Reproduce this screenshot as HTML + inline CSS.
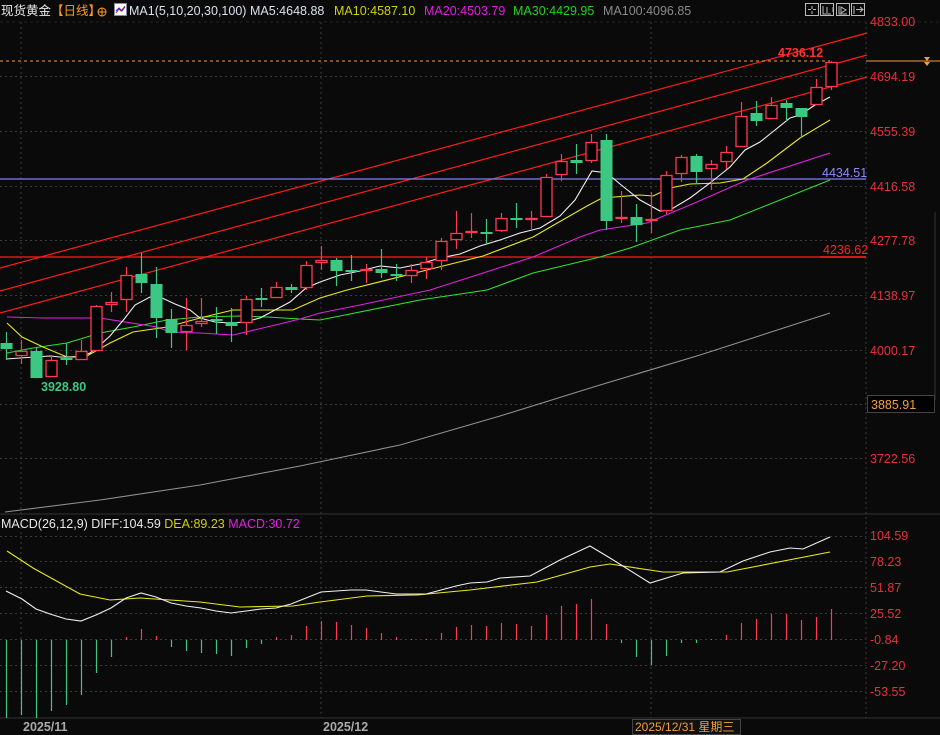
<!DOCTYPE html>
<html><head><meta charset="utf-8">
<style>
html,body{margin:0;padding:0;background:#0a0a0a;width:940px;height:735px;overflow:hidden}
svg{display:block}
text{font-family:"Liberation Sans","Noto Sans CJK SC",sans-serif}
</style></head>
<body>
<svg id="c" width="940" height="735" xmlns="http://www.w3.org/2000/svg">
<rect width="940" height="735" fill="#0a0a0a"/>
<g id="grid" stroke="#3a3a3a" stroke-dasharray="2,3" stroke-width="1"></g>
<!-- vertical grid -->
<g stroke="#3a3a3a" stroke-dasharray="2,3">
<line x1="21" y1="22" x2="21" y2="718"/><line x1="321" y1="22" x2="321" y2="718"/><line x1="651" y1="22" x2="651" y2="718"/>
<line x1="866" y1="22" x2="866" y2="718"/>
</g>
<line x1="0" y1="514" x2="940" y2="514" stroke="#333" />
<line x1="0" y1="718" x2="940" y2="718" stroke="#333" />
<line x1="0" y1="22" x2="940" y2="22" stroke="#222" stroke-dasharray="3,3"/>
<!-- channel lines -->
<g stroke="#ff1a1a" stroke-width="1.2">
<line x1="0" y1="268" x2="867" y2="33"/>
<line x1="0" y1="291" x2="867" y2="55"/>
<line x1="0" y1="313" x2="867" y2="77"/>
<line x1="0" y1="257" x2="866" y2="257"/>
</g>
<line x1="0" y1="179" x2="866" y2="179" stroke="#8080f0" stroke-width="1.2"/>
<line x1="0" y1="61" x2="830" y2="61" stroke="#f0a040" stroke-dasharray="3,3"/>
<line x1="866" y1="61" x2="940" y2="61" stroke="#f0a040"/>
<text x="778" y="57" fill="#ff3030" font-size="12.5" font-weight="bold">4736.12</text>
<text x="822" y="177" fill="#8a8aff" font-size="12.5">4434.51</text>
<text x="823" y="254" fill="#ff2020" font-size="12.5">4236.62</text>
<line x1="820" y1="257" x2="866" y2="257" stroke="#ff2020" stroke-width="1.5"/>
<text x="41" y="391" fill="#3cc882" font-size="12.5" font-weight="bold">3928.80</text>
<path d="M924 57 l6 0 l-3 4z M924 62 l6 0 l-3 4z" fill="#f0a040"/>
<g id="ma" fill="none" stroke-width="1.1"></g>
<g id="cd"></g>
<g id="mh"></g>
<!-- right axis labels -->
<g fill="#e8303c" font-size="12.5">
<text x="870" y="26">4833.00</text><text x="870" y="81">4694.19</text><text x="870" y="136">4555.39</text>
<text x="870" y="191">4416.58</text><text x="870" y="245">4277.78</text><text x="870" y="300">4138.97</text>
<text x="870" y="355">4000.17</text><text x="870" y="463">3722.56</text>
<text x="870" y="540">104.59</text><text x="870" y="566">78.23</text><text x="870" y="592">51.87</text>
<text x="870" y="618">25.52</text><text x="870" y="644">-0.84</text><text x="870" y="670">-27.20</text><text x="870" y="696">-53.55</text>
</g>
<rect x="867.5" y="395.5" width="67" height="17" fill="#000" stroke="#444"/>
<text x="871" y="409" fill="#f0a040" font-size="12.5">3885.91</text>
<line x1="935" y1="212" x2="935" y2="400" stroke="#333"/>
<!-- header -->
<text x="1" y="15" font-size="12.5"><tspan fill="#e8e8e8">现货黄金</tspan><tspan fill="#ff9a20">【日线】</tspan></text>
<circle cx="102" cy="12" r="4" fill="none" stroke="#ff9a20"/><line x1="98" y1="12" x2="106" y2="12" stroke="#ff9a20"/><line x1="102" y1="8" x2="102" y2="16" stroke="#ff9a20"/>
<rect x="114.5" y="3.5" width="12" height="12" fill="#fff" stroke="#88a"/>
<path d="M116 13 l3-4 l2 2 l4-5" stroke="#e02020" fill="none"/><path d="M116 11 l3-3 l3 3 l3-4" stroke="#2030e0" fill="none"/>
<text x="129" y="15" font-size="12.5"><tspan fill="#d8e0f0">MA1(5,10,20,30,100)</tspan><tspan fill="#d8e0f0" x="250">MA5:4648.88</tspan><tspan fill="#d0d010" x="334">MA10:4587.10</tspan><tspan fill="#e020e0" x="424">MA20:4503.79</tspan><tspan fill="#20d020" x="513">MA30:4429.95</tspan><tspan fill="#8a8a8a" x="603">MA100:4096.85</tspan></text>
<g stroke="#bbb" fill="none">
<rect x="805.5" y="3.5" width="13" height="12"/><rect x="820.5" y="3.5" width="13" height="12"/><rect x="836.5" y="3.5" width="13" height="12"/><rect x="851.5" y="3.5" width="13" height="12"/>
<path d="M812 6v3M812 11v3M808 9.5h3M813 9.5h3M823 6v8h8M827 7v6M833 7v5M839 6v8h8M841 7l5 3l-5 3zM854 6v8M856 9.5h6M860 7l3 2.5l-3 2.5"/>
</g>
<!-- macd header -->
<text x="1" y="528" font-size="12.5"><tspan fill="#e8e8e8">MACD(26,12,9) DIFF:104.59 </tspan><tspan fill="#d0d010">DEA:89.23 </tspan><tspan fill="#e020e0">MACD:30.72</tspan></text>
<text x="23" y="731" fill="#aaa" font-size="12.5" font-weight="bold">2025/11</text>
<text x="323" y="731" fill="#aaa" font-size="12.5" font-weight="bold">2025/12</text>
<rect x="632.5" y="719.5" width="108" height="15" fill="#111" stroke="#444"/>
<text x="635" y="731" fill="#f0a040" font-size="12">2025/12/31 星期三</text>
</svg>
<script>
var NS="http://www.w3.org/2000/svg";
function el(p,t,a){var e=document.createElementNS(NS,t);for(var k in a)e.setAttribute(k,a[k]);p.appendChild(e);return e;}
var g=document.getElementById('grid');
[76,131,186,240,295,350,404,458,536,561,587,613,639,665,691].forEach(function(y){el(g,'line',{x1:0,y1:y+.5,x2:866,y2:y+.5});});
var C=[['g',343,349,332,360],['r',351,356,340,364],['g',351,378,348,378],['r',360,377,355,377],['g',358,360,343,365],['r',351,360,340,360],['r',306,351,305,351],['r',302,305,292,312],['r',275,300,267,312],['g',274,283,253,293],['g',284,318,267,338],['g',319,333,309,348],['r',325,332,298,350],['r',321,324,298,327],['g',319,321,307,334],['g',322,326,308,342],['r',299,323,296,335],['g',298,300,288,307],['r',287,298,282,298],['g',287,290,284,293],['r',265,288,261,290],['r',260,263,246,270],['g',260,271,258,286],['g',270,272,255,281],['r',269,271,264,283],['g',269,273,249,278],['g',274,276,264,281],['r',270,276,264,283],['r',262,269,257,279],['r',241,261,238,270],['r',233,240,211,249],['r',231,233,213,238],['g',232,234,219,244],['r',218,231,213,232],['g',218,220,203,228],['r',218,220,211,229],['r',177,217,174,217],['r',161,175,154,181],['g',160,163,144,174],['r',142,161,134,163],['g',140,221,134,230],['r',217,219,191,223],['g',217,225,204,242],['r',219,221,192,233],['r',175,211,171,214],['r',157,174,155,182],['g',156,172,154,183],['r',164,169,160,190],['r',152,162,146,169],['r',116,147,102,147],['g',113,121,101,126],['r',105,119,97,119],['g',103,108,100,121],['g',108,117,108,138],['r',87,105,79,105],['r',62,87,61,90]];
var cd=document.getElementById('cd');
C.forEach(function(c,i){var x=6+15*i;var col=c[0]=='g'?'#3cc882':'#ff3a50';
el(cd,'line',{x1:x+.5,y1:c[3],x2:x+.5,y2:c[1],stroke:col,'stroke-width':1.2});
el(cd,'line',{x1:x+.5,y1:c[2],x2:x+.5,y2:c[4],stroke:col,'stroke-width':1.2});
var h=Math.max(c[2]-c[1],2);
if(c[0]=='g')el(cd,'rect',{x:x-5.5,y:c[1],width:12,height:h,fill:col});
else el(cd,'rect',{x:x-5,y:c[1]+.5,width:11,height:Math.max(h-1,1),fill:'#000',stroke:col,'stroke-width':1.3});});
var ma=document.getElementById('ma');
function pl(p,col,w){el(ma,'polyline',{points:p,stroke:col,'stroke-width':w||1.1,fill:'none'});}
pl("5,512 100,500 200,485 300,466 400,445 500,416 600,385 700,355 830,313","#909090");
pl("7,353 33,348 67,343 100,333 133,327 167,320 200,317 240,316 267,317 300,319 320,320 420,300 487,290 533,273 600,257 630,248 680,230 730,220 830,180","#30e030");
pl("7,317 43,318 100,318 157,327 170,332 200,333 233,335 267,327 300,319 320,313 360,305 430,290 533,257 580,237 600,230 647,223 697,202 747,180 830,153","#e020e0");
pl("7,323 22,337 43,347 67,357 87,356 110,343 133,332 167,327 200,318 233,310 273,310 293,310 320,298 347,290 427,270 483,256 533,237 587,206 602,198 640,195 653,196 670,188 690,184 720,183 743,179 767,163 800,138 830,120","#e8e820");
pl("6,359 20,358 35,357 50,356 60,357 80,357 90,353 100,345 110,336 125,318 135,305 150,297 160,297 175,304 190,310 200,318 215,322 230,323 245,322 260,318 275,310 290,302 306,288 320,282 340,275 360,271 380,266 400,268 420,264 440,258 460,254 480,246 500,240 520,233 540,228 560,216 575,200 592,171 607,173 620,184 640,200 660,211 670,210 690,198 710,183 730,167 745,150 760,142 775,130 790,118 800,115 815,105 830,97","#f0f0f0");
pl("7,551 33,568 80,594 110,600 140,598 200,602 240,607 293,606 320,602 367,596 417,595 470,590 537,582 590,567 610,564 663,572 727,572 830,552","#e8e820");
pl("6,591 22,599 36,609 50,614 66,619 81,621 96,615 111,608 126,598 141,593 156,597 171,603 186,606 201,608 216,611 231,613 246,611 261,609 276,608 291,604 306,598 321,592 336,591 351,590 366,590 381,592 396,594 411,594 426,594 441,590 456,586 470,583 487,582 500,578 530,576 560,560 590,546 610,558 650,583 683,573 720,572 743,561 770,552 790,548 803,549 830,537","#f0f0f0");
var H=[718,715,718,711,705,695,673,657,637,629,636,647,651,653,654,656,648,644,637,635,626,621,622,625,628,633,637,639,639,633,627,625,626,623,624,626,615,606,604,599,624,643,657,665,656,643,643,640,635,623,619,614,614,620,617,609];
var mh=document.getElementById('mh');
H.forEach(function(y,i){var x=6+15*i+.5;var col=y>640?'#3cc882':'#ff3a50';el(mh,'line',{x1:x,y1:640,x2:x,y2:y==640?639:y,stroke:col,'stroke-width':1.2});});
</script>
</body></html>
